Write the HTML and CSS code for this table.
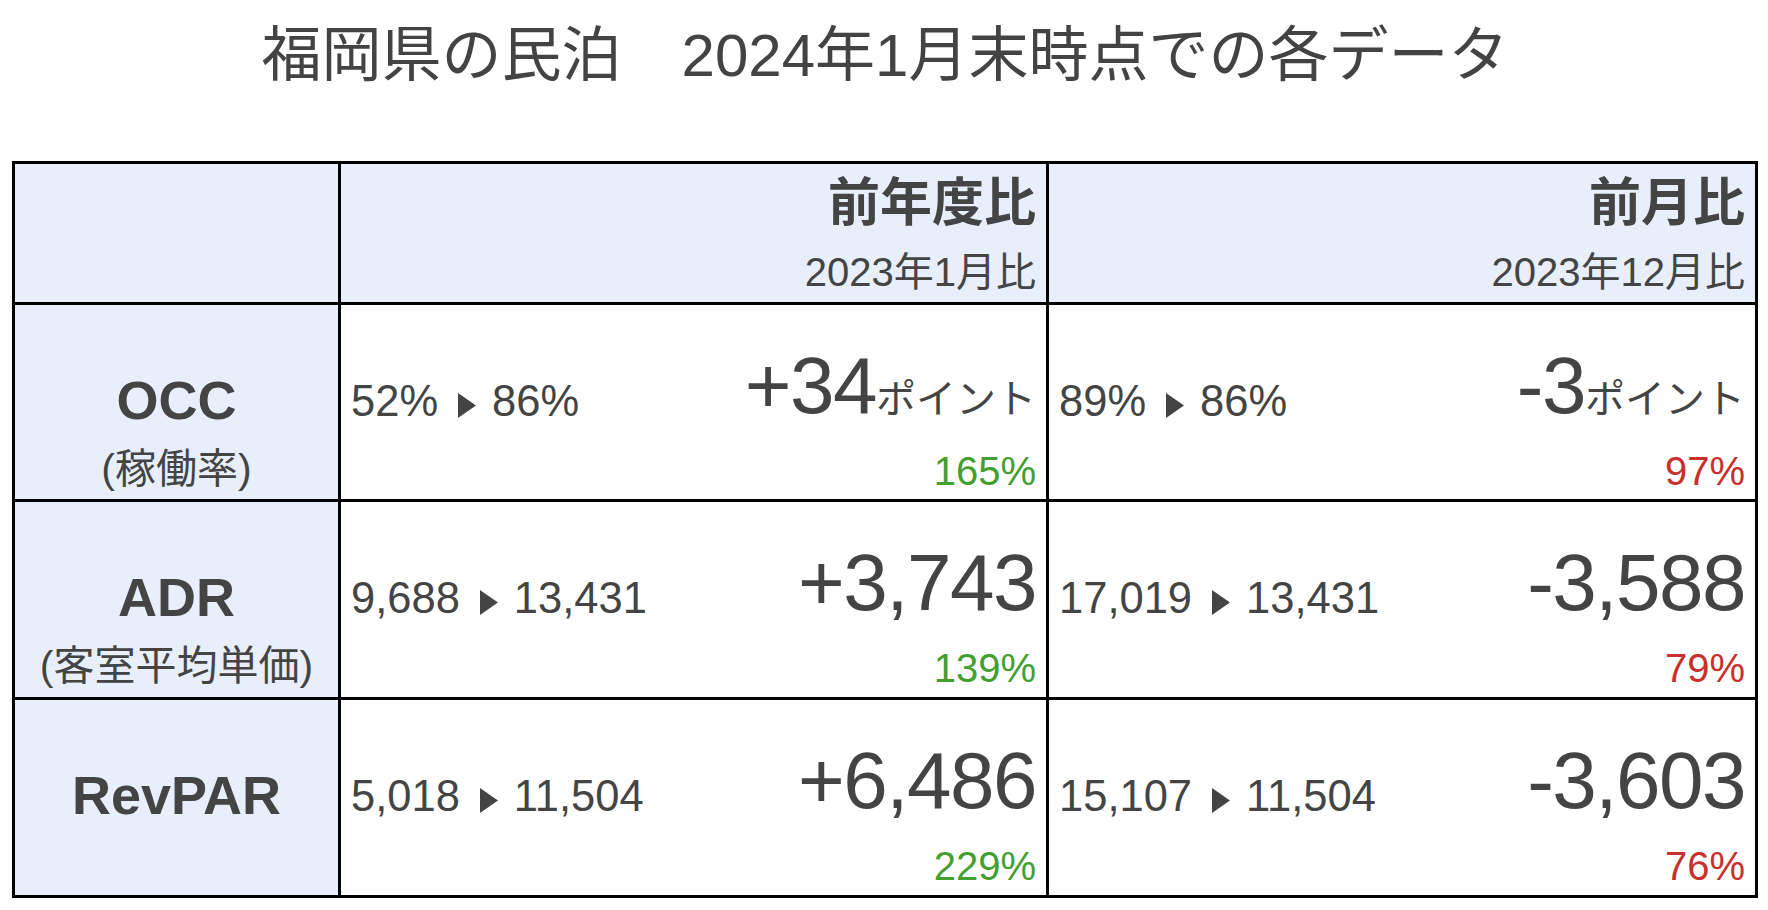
FILE: index.html
```html
<!DOCTYPE html>
<html lang="ja">
<head>
<meta charset="utf-8">
<title>福岡県の民泊 2024年1月末時点での各データ</title>
<link rel="stylesheet" href="styles.css">
</head>
<body>
<div class="page">
  <h1 class="title">福岡県の民泊　2024年1月末時点での各データ</h1>
  <div class="sheet">
    <div class="cell head corner"></div>
    <div class="cell head">
      <div class="head-main">前年度比</div>
      <div class="head-sub">2023年1月比</div>
    </div>
    <div class="cell head">
      <div class="head-main">前月比</div>
      <div class="head-sub">2023年12月比</div>
    </div>

    <div class="cell label">
      <div class="metric">OCC</div>
      <div class="metric-sub">(稼働率)</div>
    </div>
    <div class="cell val">
      <div class="val-top">
        <span class="from-to">52%<svg class="arrow" viewBox="0 0 18 25" aria-label="▶"><polygon points="0,0 18,12.5 0,25"/></svg>86%</span>
        <span class="diff">+34<span class="unit">ポイント</span></span>
      </div>
      <div class="pct up">165%</div>
    </div>
    <div class="cell val">
      <div class="val-top">
        <span class="from-to">89%<svg class="arrow" viewBox="0 0 18 25" aria-label="▶"><polygon points="0,0 18,12.5 0,25"/></svg>86%</span>
        <span class="diff">-3<span class="unit">ポイント</span></span>
      </div>
      <div class="pct down">97%</div>
    </div>

    <div class="cell label">
      <div class="metric">ADR</div>
      <div class="metric-sub">(客室平均単価)</div>
    </div>
    <div class="cell val">
      <div class="val-top">
        <span class="from-to">9,688<svg class="arrow" viewBox="0 0 18 25" aria-label="▶"><polygon points="0,0 18,12.5 0,25"/></svg>13,431</span>
        <span class="diff">+3,743</span>
      </div>
      <div class="pct up">139%</div>
    </div>
    <div class="cell val">
      <div class="val-top">
        <span class="from-to">17,019<svg class="arrow" viewBox="0 0 18 25" aria-label="▶"><polygon points="0,0 18,12.5 0,25"/></svg>13,431</span>
        <span class="diff">-3,588</span>
      </div>
      <div class="pct down">79%</div>
    </div>

    <div class="cell label">
      <div class="metric">RevPAR</div>
    </div>
    <div class="cell val">
      <div class="val-top">
        <span class="from-to">5,018<svg class="arrow" viewBox="0 0 18 25" aria-label="▶"><polygon points="0,0 18,12.5 0,25"/></svg>11,504</span>
        <span class="diff">+6,486</span>
      </div>
      <div class="pct up">229%</div>
    </div>
    <div class="cell val">
      <div class="val-top">
        <span class="from-to">15,107<svg class="arrow" viewBox="0 0 18 25" aria-label="▶"><polygon points="0,0 18,12.5 0,25"/></svg>11,504</span>
        <span class="diff">-3,603</span>
      </div>
      <div class="pct down">76%</div>
    </div>
  </div>
</div>
</body>
</html>
```

FILE: styles.css
```css
html, body {
  margin: 0;
  background: #ffffff;
}

body {
  font-family: "Liberation Sans", "Noto Sans CJK JP", sans-serif;
  color: #444444;
}

.page {
  width: 1746px;
  margin-left: 12px;
}

.title {
  margin: 0;
  height: 161px;
  box-sizing: border-box;
  padding-top: 26px;
  font-size: 60px;
  line-height: 60px;
  font-weight: 400;
  text-align: center;
  color: #434343;
}

.sheet {
  display: grid;
  grid-template-columns: 323px 705px 706px;
  grid-template-rows: 138px 194px 195px 195px;
  gap: 3px;
  padding: 3px;
  background: #000000;
}

.cell {
  background: #ffffff;
  padding: 0 10px;
  min-width: 0;
}

.cell.head,
.cell.label {
  background: #e8eefa;
}

.head {
  text-align: right;
}

.head-main {
  margin-top: 13px;
  font-size: 52px;
  line-height: 1;
  font-weight: 700;
}

.head-sub {
  margin-top: 23px;
  font-size: 40px;
  line-height: 1;
}

.label {
  text-align: center;
}

.metric {
  margin-top: 68px;
  font-size: 54px;
  line-height: 1;
  font-weight: 700;
}

.metric-sub {
  margin-top: 22px;
  font-size: 41px;
  line-height: 1;
  word-spacing: 0;
}

.metric-sub .paren {
  padding: 0 3px;
}

.val-top {
  margin-top: 41px;
  display: flex;
  justify-content: space-between;
  align-items: flex-end;
}

.from-to {
  font-size: 43.5px;
  line-height: 1;
  margin-bottom: 3px;
  white-space: nowrap;
}

.arrow {
  display: inline-block;
  width: 18px;
  height: 25px;
  margin: 0 16px 0 20px;
  vertical-align: -2px;
  fill: #444444;
}

.diff {
  font-size: 80px;
  line-height: 1;
  letter-spacing: -1.5px;
  white-space: nowrap;
}

.unit {
  font-size: 40px;
  letter-spacing: 0;
}

.pct {
  margin-top: 25px;
  font-size: 40px;
  line-height: 1;
  text-align: right;
}

.up {
  color: #43a030;
}

.down {
  color: #c9302c;
}
```
